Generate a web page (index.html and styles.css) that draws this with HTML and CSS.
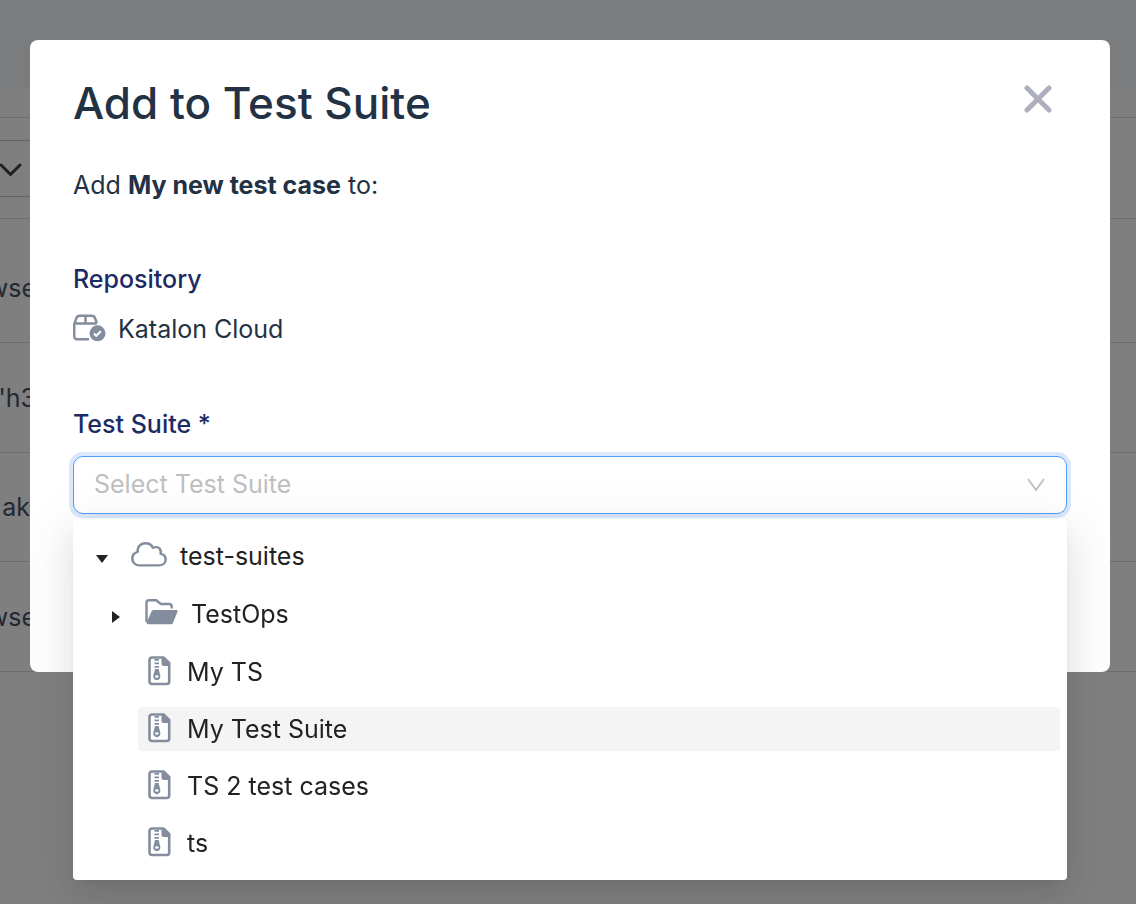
FILE: index.html
```html
<!DOCTYPE html>
<html lang="en">
<head>
<meta charset="utf-8">
<meta name="viewport" content="width=device-width, initial-scale=1">
<title>Add to Test Suite</title>
<link rel="stylesheet" href="styles.css">
</head>
<body>
<svg width="0" height="0" class="sprite" aria-hidden="true">
  <symbol id="file" viewBox="0 0 23 32">
    <path d="M4 1.500h11.500L21.200 7v18.500a2.500 2.500 0 0 1-2.500 2.500H4a2.500 2.500 0 0 1-2.500-2.500V4A2.500 2.500 0 0 1 4 1.500z" fill="#fff" stroke="#838d9d" stroke-width="2.600"/>
    <path d="M13.500 1h3l5.500 5.500V10h-6a2.500 2.500 0 0 1-2.500-2.500z" fill="#838d9d"/>
    <path d="M6.500 3.800h4.500M6.500 7.300h4.500M6.500 10.800h4.500" stroke="#838d9d" stroke-width="1.800"/>
    <path d="M7 13h3.600l1.700 6.800a3.600 3.600 0 1 1-7 0z" fill="#838d9d"/>
    <ellipse cx="8.800" cy="20.500" rx="1.800" ry="1.300" fill="#fff"/>
  </symbol>
</svg>

<main class="page">
  <header class="page-head"></header>
  <div class="page-strip"></div>
  <div class="page-tools">
    <button class="filter" type="button" aria-label="Filter">
      <svg width="24" height="16" viewBox="0 0 24 16"><path d="M3 4l9.500 9.500L22 4" fill="none" stroke="#404048" stroke-width="3" stroke-linecap="round" stroke-linejoin="round"/></svg>
    </button>
  </div>
  <div class="page-row page-row-tall"><span>wse</span></div>
  <div class="page-row"><span>"h3</span></div>
  <div class="page-row page-row-short"><span>ak</span></div>
  <div class="page-row"><span>wse</span></div>
</main>

<div class="overlay">
  <section class="modal" role="dialog" aria-modal="true" aria-labelledby="title">
    <header class="modal-head">
      <h1 id="title">Add to Test Suite</h1>
      <button class="close" type="button" aria-label="Close">
        <svg width="28" height="28" viewBox="0 0 28 28"><path d="M3 3l22 22M25 3L3 25" stroke="#adb0bc" stroke-width="5" stroke-linecap="round"/></svg>
      </button>
    </header>
    <p class="intro">Add <strong>My new test case</strong> to:</p>
    <h2 class="label">Repository</h2>
    <div class="repo">
      <svg width="33" height="30" viewBox="0 0 33 30" fill="none">
        <path d="M16 25.200H4a2.800 2.800 0 0 1-2.800-2.800V10l2.200-5.800a3.500 3.500 0 0 1 3.300-2.400h12a3.500 3.500 0 0 1 3.300 2.400l1.800 4.800M1.200 9.500h22.600M12.500 2v7.500" stroke="#838d9d" stroke-width="2.500"/>
        <circle cx="24.500" cy="19.300" r="8" fill="#838d9d"/>
        <path d="M20.900 19.500l2.400 2.300 4.500-4.500" stroke="#fff" stroke-width="2.200"/>
      </svg>
      <span>Katalon Cloud</span>
    </div>
    <label class="label label-field" for="suite">Test Suite *</label>
    <div class="select">
      <input id="suite" type="text" role="combobox" aria-expanded="true" aria-controls="tree" placeholder="Select Test Suite" autocomplete="off">
      <svg class="select-arrow" width="20" height="16" viewBox="0 0 20 16"><path d="M2 2l8 11 8-11" fill="none" stroke="#bcbcbc" stroke-width="1.800"/></svg>
      <div class="menu">
        <ul class="tree" id="tree" role="tree">
          <li class="branch" role="treeitem" aria-expanded="true">
            <div class="node">
              <button class="toggle" type="button" aria-label="Collapse test-suites"><svg width="14" height="8" viewBox="0 0 14 8"><path d="M1 0h12L7 8z" fill="#222"/></svg></button>
              <button class="item" type="button">
                <svg width="36" height="30" viewBox="0 0 36 30"><path transform="translate(0 .7) scale(1 .93)" d="M8.500 25.500H28c4 0 6.700-2.800 6.700-6.300 0-3.600-2.500-5.700-5-6.200 .500-4.300-1.200-7.700-5.400-7.200-.900 0-1.700.300-2.400.800C20.700 3.500 18 1.700 14.500 1.700c-5 0-8.400 4-7.800 9.300C3.500 12 1.300 14.500 1.300 18c0 4.500 3.200 7.500 7.200 7.500z" fill="none" stroke="#838d9d" stroke-width="2.500" stroke-linejoin="round"/></svg>
                <span>test-suites</span>
              </button>
            </div>
            <ul class="children" role="group">
              <li class="folder" role="treeitem" aria-expanded="false">
                <div class="node">
                  <button class="toggle" type="button" aria-label="Expand TestOps"><svg width="8" height="14" viewBox="0 0 8 14"><path d="M0 1v12l8-6z" fill="#222"/></svg></button>
                  <button class="item" type="button">
                    <svg width="33" height="30" viewBox="0 0 33 30"><path d="M1.500 23V3.500A2.300 2.300 0 0 1 3.800 1.200h7.400l4.600 3.800h8.400a2.500 2.500 0 0 1 2.500 2.500v2" fill="none" stroke="#838d9d" stroke-width="2.400"/><path d="M9 11h22.300c1 0 1.600.800 1.200 1.700l-4.500 11c-.400 1-1.200 1.500-2.200 1.500H3c-1 0-1.700-1-1.300-1.900L6.500 12.500c.400-1 1.300-1.500 2.500-1.500z" fill="#838d9d"/></svg>
                    <span>TestOps</span>
                  </button>
                </div>
              </li>
              <li role="treeitem"><div class="node"><span class="toggle"></span><button class="item item-file" type="button"><svg width="23" height="32"><use href="#file"/></svg><span>My TS</span></button></div></li>
              <li role="treeitem"><div class="node"><span class="toggle"></span><button class="item item-file active" type="button"><svg width="23" height="32"><use href="#file"/></svg><span>My Test Suite</span></button></div></li>
              <li role="treeitem"><div class="node"><span class="toggle"></span><button class="item item-file" type="button"><svg width="23" height="32"><use href="#file"/></svg><span>TS 2 test cases</span></button></div></li>
              <li role="treeitem"><div class="node"><span class="toggle"></span><button class="item item-file" type="button"><svg width="23" height="32"><use href="#file"/></svg><span>ts</span></button></div></li>
            </ul>
          </li>
        </ul>
      </div>
    </div>
  </section>
</div>
</body>
</html>
```
FILE: styles.css
```css
* { box-sizing: border-box; }
body {
  margin: 0;
  min-height: 100vh;
  overflow: hidden;
  background: #fff;
  color: #233145;
  font-family: Inter, "Liberation Sans", sans-serif;
  font-size: 25px;
  line-height: 32px;
}
h1, h2, p, ul { margin: 0; padding: 0; }
ul { list-style: none; }
button { border: 0; background: none; padding: 0; font: inherit; color: inherit; text-align: left; }
svg { display: block; flex: none; }
.sprite { position: absolute; }

/* Page behind the dialog */
.page-head { height: 88px; background: #f7f8fb; }
.page-strip { height: 30px; border-bottom: 1px solid #dcdcdc; }
.page-tools { height: 101px; padding: 22px 0; border-bottom: 1px solid #dcdcdc; }
.filter {
  display: flex;
  align-items: center;
  justify-content: flex-end;
  width: 32px;
  height: 57px;
  padding: 0 10px 0 0;
  border: solid #c4c4d0;
  border-width: 1px 0;
}
.page-row {
  display: flex;
  align-items: center;
  height: 110px;
  border-bottom: 1px solid #dcdcdc;
  color: #465066;
}
.page-row span { display: flex; justify-content: flex-end; width: 36px; }
.page-row-tall { height: 124px; padding-top: 14px; }
.page-row-short { height: 109px; }
.page-row-short span { width: 30px; }

/* Dialog */
.overlay {
  position: fixed;
  inset: 0;
  padding: 40px 26px 0 30px;
  background: rgba(0, 0, 0, 0.5);
}
.modal { padding: 40px 43px 158px; border-radius: 8px; background: #fff; }
.modal-head { display: flex; justify-content: space-between; padding-right: 15px; }
h1 { font-size: 44px; line-height: 46px; font-weight: 500; }
.close { display: flex; height: 28px; margin-top: 5px; }
.intro { margin-top: 43px; }
.intro strong { font-weight: 700; }
.label { display: block; color: #1d2b64; font-size: 25px; line-height: 32px; font-weight: 500; }
h2.label { margin-top: 62px; }
.label-field { margin-top: 63px; }
.repo { display: flex; align-items: center; gap: 12px; margin-top: 18px; }

/* Tree select */
.select { position: relative; margin-top: 16px; }
.select input {
  display: block;
  width: 100%;
  height: 58px;
  padding: 0 60px 2px 20px;
  border: 1px solid #4f9ff5;
  border-radius: 10px;
  outline: 0;
  box-shadow: 0 0 0 4px #dbe7fb;
  background: #fff;
  color: inherit;
  font: inherit;
}
.select input::placeholder { color: #bfbfbf; opacity: 1; }
.select-arrow { position: absolute; top: 21px; right: 21px; }
.menu {
  position: absolute;
  top: calc(100% + 5px);
  left: 0;
  right: 0;
  padding: 15px 7px;
  border-radius: 4px;
  background: #fff;
  color: #222;
  box-shadow: 0 6px 12px -8px rgba(0, 0, 0, 0.12), 0 12px 32px rgba(0, 0, 0, 0.08), 0 18px 56px 16px rgba(0, 0, 0, 0.05);
}
.children { margin-top: 14px; padding-left: 14px; }
.children li + li { margin-top: 13px; }
.children .folder + li { margin-top: 14px; }
.node { display: flex; height: 44px; }
.toggle { display: flex; align-items: center; justify-content: center; width: 44px; padding-top: 6px; }
.item { display: flex; flex: 1; align-items: center; gap: 13px; padding: 0 7px; border-radius: 4px; }
.item-file { gap: 16px; padding-left: 10px; }
.item.active { background: #f4f4f4; }
```
